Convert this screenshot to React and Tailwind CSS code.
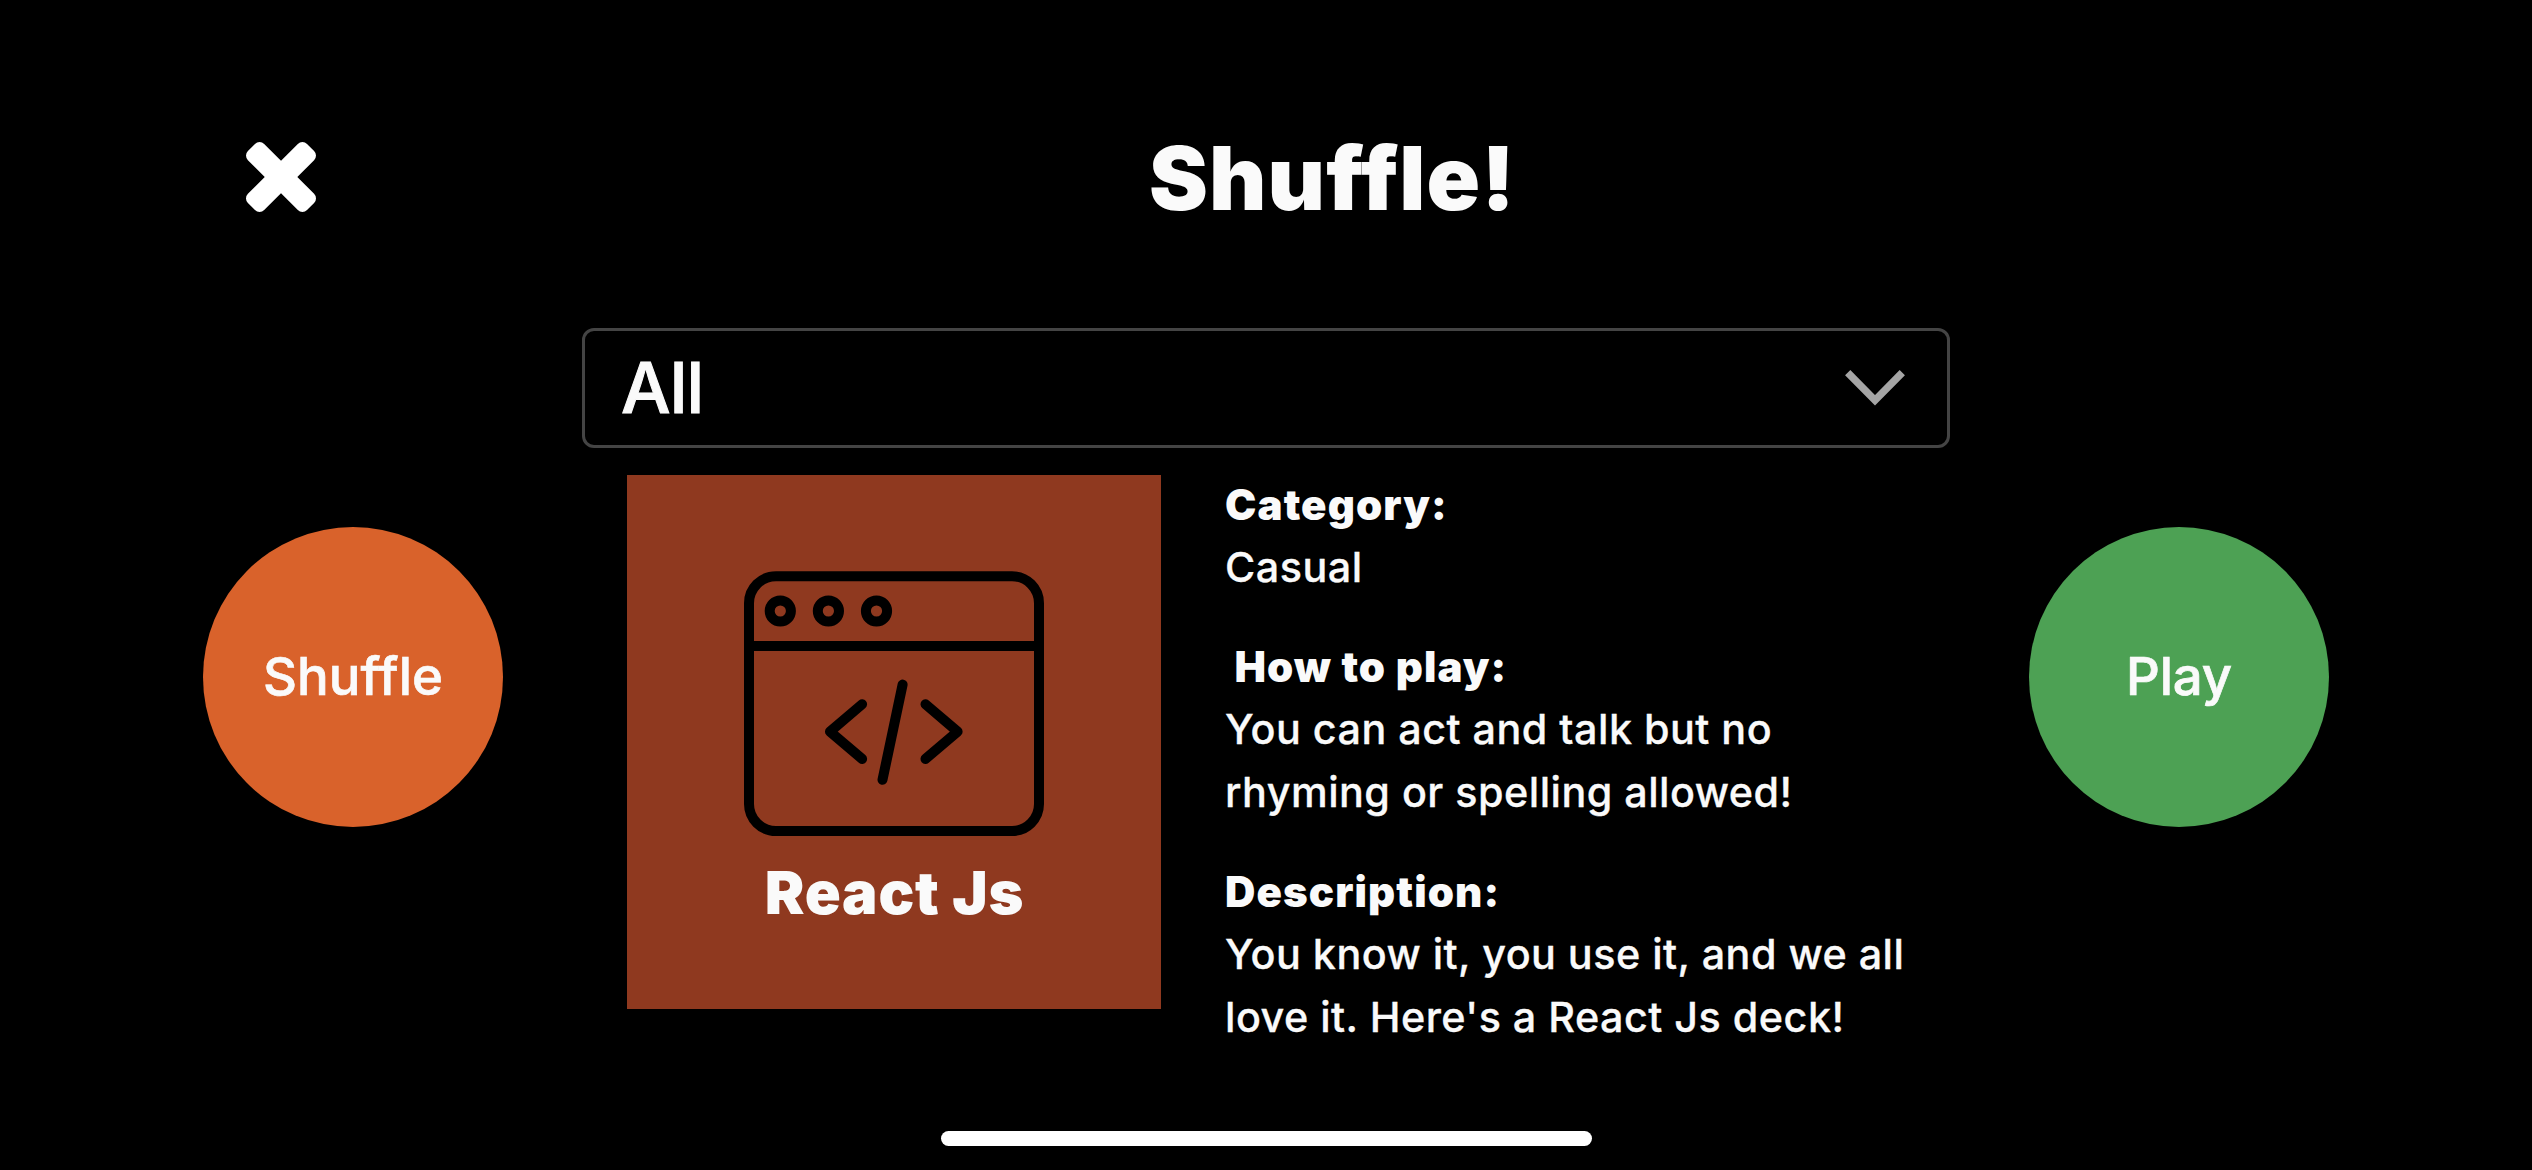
import React from "react";

function CloseIcon() {
  return (
    <svg width="72" height="72" viewBox="-36 -36 72 72" fill="#fff" aria-hidden="true">
      <rect x="-41.8" y="-11.5" width="83.6" height="23" rx="6.5" transform="rotate(45)" />
      <rect x="-41.8" y="-11.5" width="83.6" height="23" rx="6.5" transform="rotate(-45)" />
    </svg>
  );
}

function ChevronIcon() {
  return (
    <svg width="60" height="36" viewBox="0 0 60 36" fill="none" stroke="#a5a5a5" strokeWidth="7.4" aria-hidden="true">
      <path d="M2.7 2.6 30 30.3 57.3 2.6" />
    </svg>
  );
}

function CodeWindowIcon() {
  return (
    <svg
      width="300"
      height="265"
      viewBox="0 0 300 265"
      fill="none"
      stroke="#000"
      strokeWidth="10"
      strokeLinecap="round"
      strokeLinejoin="round"
      aria-hidden="true"
    >
      <rect x="5" y="5.2" width="290" height="254.8" rx="27" />
      <path d="M5 75H295" />
      <circle cx="36.3" cy="40" r="10.6" />
      <circle cx="84.4" cy="40" r="10.6" />
      <circle cx="132.5" cy="40" r="10.6" />
      <path d="M118.1 133.2 86 160.6 118.1 187.9" />
      <path d="M181.5 133.2 213.6 160.6 181.5 187.9" />
      <path d="M158.6 113.6 138.5 208.8" />
    </svg>
  );
}

function RoundButton({ className, children }) {
  return (
    <button
      className={
        "mt-[199px] flex size-[300px] shrink-0 items-center justify-center rounded-full text-[52.7px] font-medium [-webkit-text-stroke:0.7px_#fafafa] " +
        className
      }
    >
      {children}
    </button>
  );
}

function Detail({ label, children }) {
  return (
    <section>
      <h3 className="whitespace-pre text-[42px] font-black tracking-[1.1px]">{label}</h3>
      <p className="whitespace-pre-line text-[41.3px] font-medium tracking-[0.48px] [-webkit-text-stroke:0.3px_#fafafa]">
        {children}
      </p>
    </section>
  );
}

export default function App() {
  return (
    <div className="flex h-[1170px] w-[2532px] flex-col overflow-hidden bg-black font-['Inter',sans-serif] text-[#fafafa]">
      <header className="flex h-[328px] shrink-0 items-start pl-[245px]">
        <button className="mt-[141px]" aria-label="Close">
          <CloseIcon />
        </button>
        <h1 className="ml-[832px] mt-[133px] text-[88.5px] font-black leading-[90px] tracking-[1.1px]">
          Shuffle!
        </h1>
      </header>

      <main className="flex h-[803px] shrink-0 items-start justify-between pl-[203px] pr-[203px]">
        <RoundButton className="bg-[#d9622b] tracking-[0.1px]">Shuffle</RoundButton>

        <div className="flex w-[1368px] shrink-0 flex-col">
          <div className="flex h-[120px] items-center justify-between rounded-[12px] border-[3px] border-[#444] pl-[36px] pr-[42px]">
            <span className="text-[70px] font-medium leading-[114px] tracking-[-0.9px] [-webkit-text-stroke:1px_#fafafa]">
              All
            </span>
            <ChevronIcon />
          </div>

          <div className="flex items-start pl-[45px]">
            <div className="mt-[27px] flex size-[534px] shrink-0 flex-col items-center bg-[#8f391f] pt-[96px]">
              <CodeWindowIcon />
              <h2 className="mt-[26px] pl-[1px] text-[59.5px] font-black leading-[60px] tracking-[0.8px]">
                React Js
              </h2>
            </div>
            <div className="ml-[64px] mt-[25px] flex flex-col gap-[36px] leading-[63px]">
              <Detail label="Category:">Casual</Detail>
              <Detail label=" How to play:">
                {"You can act and talk but no\nrhyming or spelling allowed!"}
              </Detail>
              <Detail label="Description:">
                {"You know it, you use it, and we all\nlove it. Here's a React Js deck!"}
              </Detail>
            </div>
          </div>
        </div>

        <RoundButton className="bg-[#4da154] tracking-[-0.1px]">Play</RoundButton>
      </main>

      <div className="ml-[941px] h-[15px] w-[651px] rounded-full bg-white" />
    </div>
  );
}
